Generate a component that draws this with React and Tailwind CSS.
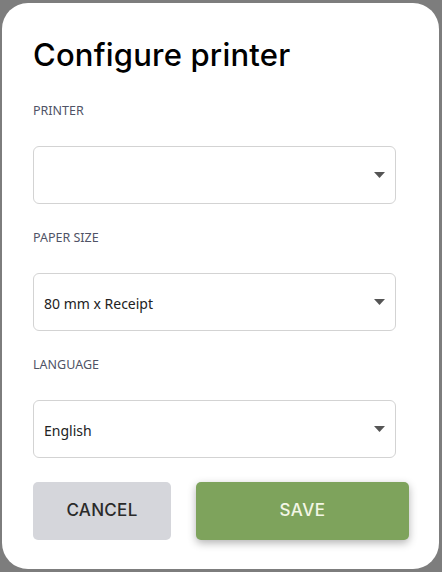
import React from "react";

const heading = { fontFamily: "Inter, 'Noto Sans', sans-serif" };

function Caret() {
  return (
    <svg width="11" height="6" viewBox="0 0 11 6" className="shrink-0">
      <path d="M0 0h11L5.5 6z" fill="#555" />
    </svg>
  );
}

function Field({ label, value }) {
  return (
    <div className="flex flex-col">
      <span className="text-[12.5px] leading-[18px] text-[#4f5366]">{label}</span>
      <div className="mt-[26px] flex h-[58px] w-[363px] items-center justify-between rounded-[6px] border border-[#d3d3d3] pl-[10px] pr-[10px]">
        <span className="pt-[3px] text-[14px] text-[#222]">{value}</span>
        <Caret />
      </div>
    </div>
  );
}

export default function App() {
  return (
    <div
      className="h-[572px] w-[442px] overflow-hidden bg-[#7d7d7d] pl-[2px] pt-[3px]"
      style={{ fontFamily: "'Noto Sans', 'Open Sans', sans-serif" }}
    >
      <div className="h-[566px] w-[437px] rounded-[26px] bg-white pl-[31px] pt-[32px]">
        <h1 style={heading} className="text-[31px] font-medium leading-[40px] tracking-[0.2px] text-black">
          Configure printer
        </h1>
        <div className="mt-[27px] flex flex-col gap-[25px]">
          <Field label="PRINTER" value="" />
          <Field label="PAPER SIZE" value="80 mm x Receipt" />
          <Field label="LANGUAGE" value="English" />
        </div>
        <div className="mt-[24px] flex gap-[25px]">
          <button
            style={heading}
            className="h-[58px] w-[138px] rounded-[5px] bg-[#d5d6db] text-[17px] font-medium tracking-[0.3px] text-[#2a2a2a]"
          >
            CANCEL
          </button>
          <button
            style={heading}
            className="h-[58px] w-[213px] rounded-[5px] bg-[#7ea35c] text-[17px] font-medium tracking-[0.5px] text-[#f3f6e6] shadow-[0_3px_8px_rgba(0,0,0,0.3)]"
          >
            SAVE
          </button>
        </div>
      </div>
    </div>
  );
}
